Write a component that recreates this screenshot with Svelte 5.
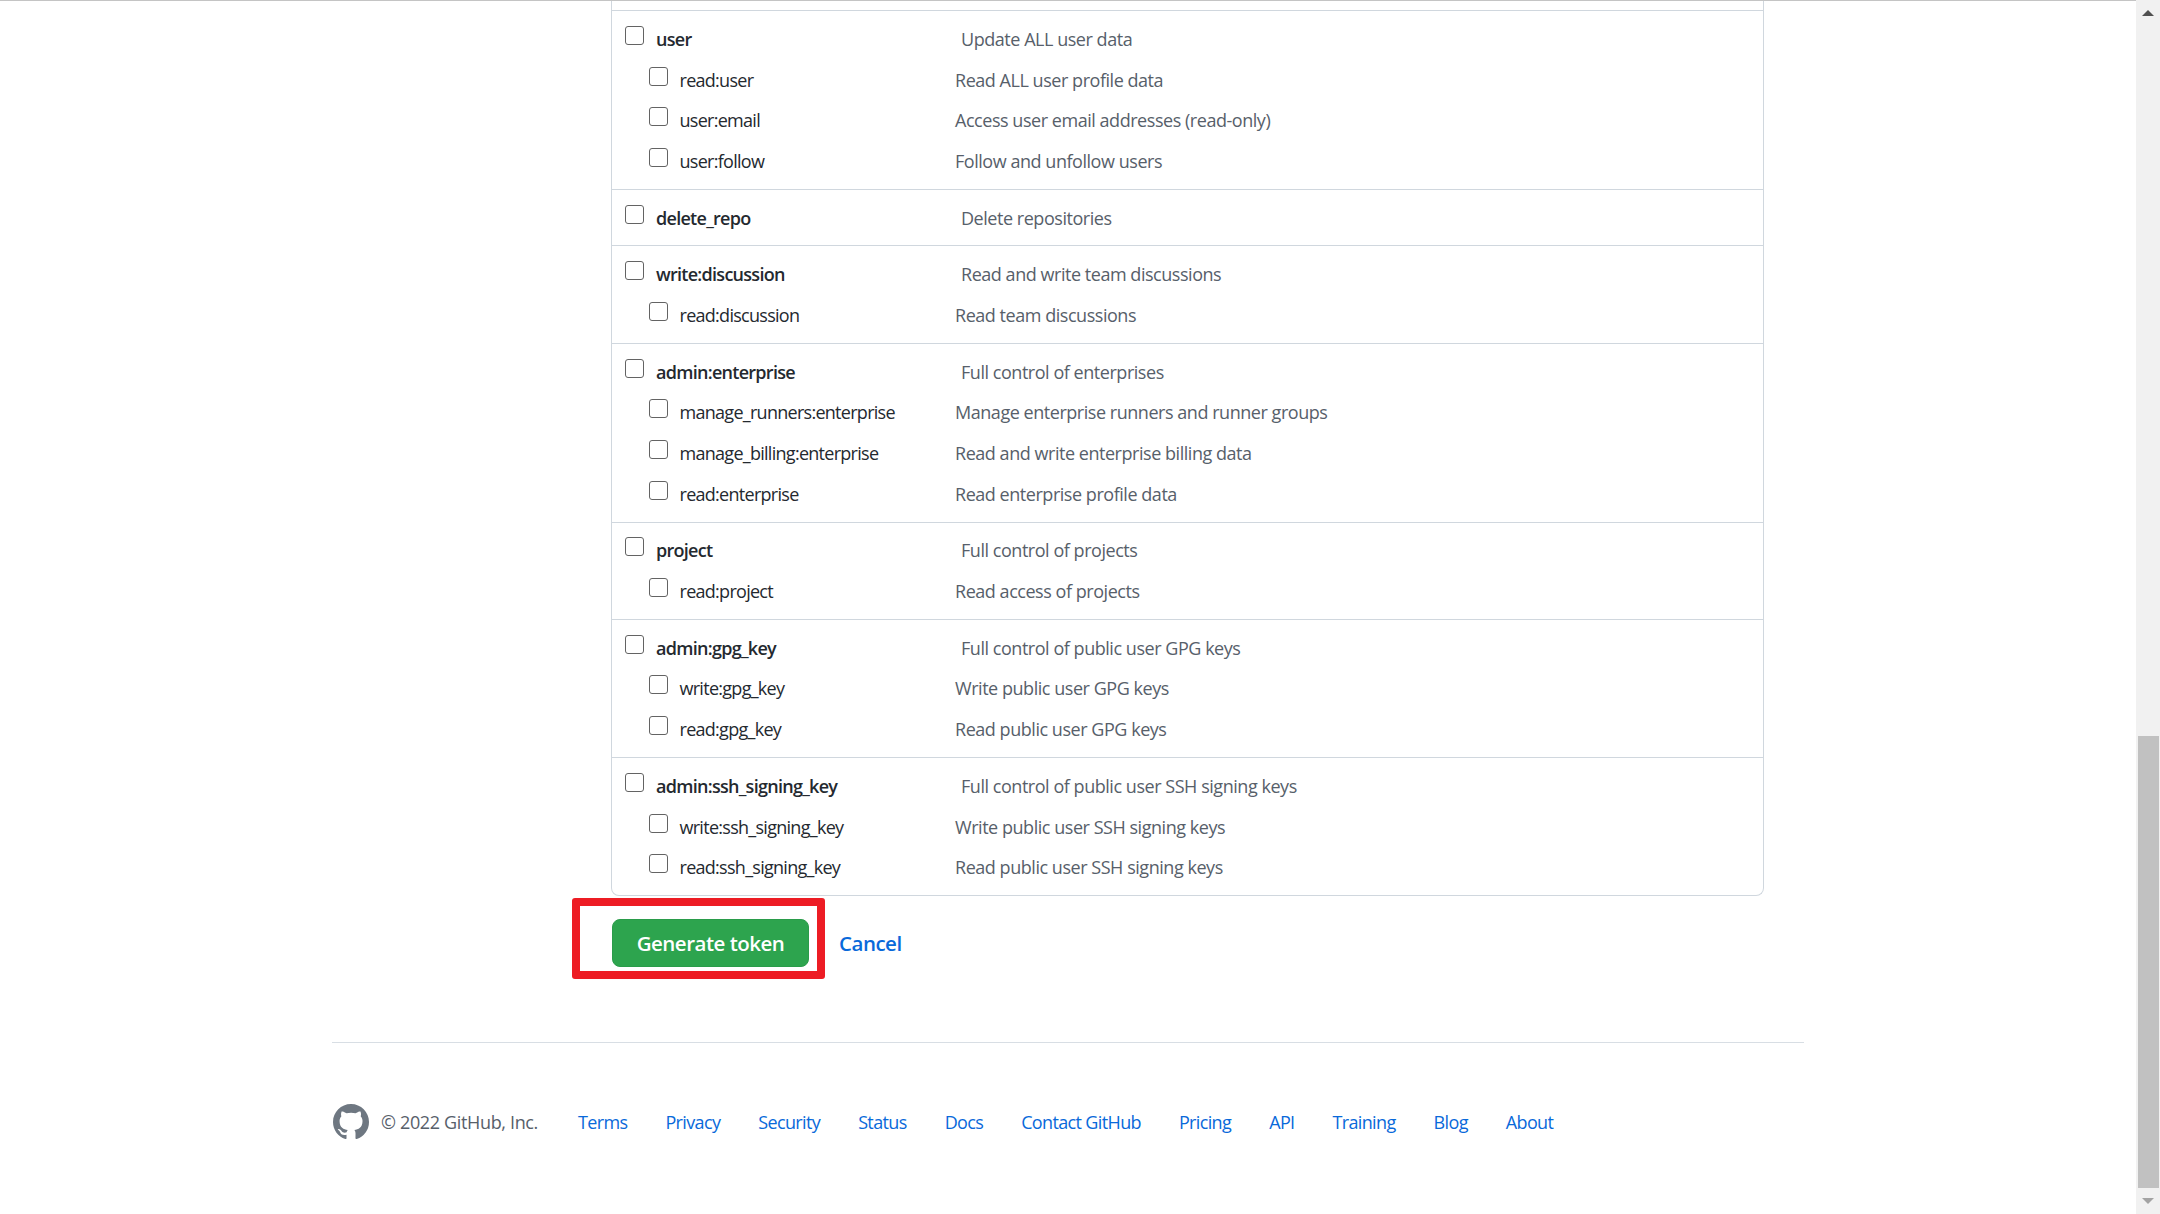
<script lang="ts">
  const scopes = [
    { name: "user", desc: "Update ALL user data", subs: [
      ["read:user", "Read ALL user profile data"],
      ["user:email", "Access user email addresses (read-only)"],
      ["user:follow", "Follow and unfollow users"],
    ] },
    { name: "delete_repo", desc: "Delete repositories", subs: [] },
    { name: "write:discussion", desc: "Read and write team discussions", subs: [
      ["read:discussion", "Read team discussions"],
    ] },
    { name: "admin:enterprise", desc: "Full control of enterprises", subs: [
      ["manage_runners:enterprise", "Manage enterprise runners and runner groups"],
      ["manage_billing:enterprise", "Read and write enterprise billing data"],
      ["read:enterprise", "Read enterprise profile data"],
    ] },
    { name: "project", desc: "Full control of projects", subs: [
      ["read:project", "Read access of projects"],
    ] },
    { name: "admin:gpg_key", desc: "Full control of public user GPG keys", subs: [
      ["write:gpg_key", "Write public user GPG keys"],
      ["read:gpg_key", "Read public user GPG keys"],
    ] },
    { name: "admin:ssh_signing_key", desc: "Full control of public user SSH signing keys", subs: [
      ["write:ssh_signing_key", "Write public user SSH signing keys"],
      ["read:ssh_signing_key", "Read public user SSH signing keys"],
    ] },
  ];

  const links = ["Terms", "Privacy", "Security", "Status", "Docs", "Contact GitHub", "Pricing", "API", "Training", "Blog", "About"];
</script>

<div class="window">
  <main class="page">
    <div class="container">
      <div class="form">
        <div class="scopes">
          <div class="clipped"></div>
          {#each scopes as scope (scope.name)}
            <section class="scope">
              <label class="row parent">
                <input type="checkbox" />
                <span class="name">{scope.name}</span>
                <span class="desc">{scope.desc}</span>
              </label>
              {#each scope.subs as sub (sub[0])}
                <label class="row child">
                  <input type="checkbox" />
                  <span class="name">{sub[0]}</span>
                  <span class="desc">{sub[1]}</span>
                </label>
              {/each}
            </section>
          {/each}
        </div>

        <div class="actions">
          <div class="button-wrap">
            <button class="generate">Generate token</button>
            <div class="highlight"></div>
          </div>
          <a class="cancel" href="#cancel">Cancel</a>
        </div>
      </div>

      <footer class="footer">
        <svg class="mark" viewBox="0 0 16 16" width="36" height="36" aria-hidden="true">
          <path fill="currentColor" d="M8 0C3.58 0 0 3.58 0 8c0 3.54 2.29 6.53 5.47 7.59.4.07.55-.17.55-.38 0-.19-.01-.82-.01-1.49-2.01.37-2.53-.49-2.69-.94-.09-.23-.48-.94-.82-1.13-.28-.15-.68-.52-.01-.53.63-.01 1.08.58 1.23.82.72 1.21 1.87.87 2.33.66.07-.52.28-.87.51-1.07-1.78-.2-3.64-.89-3.64-3.95 0-.87.31-1.59.82-2.15-.08-.2-.36-1.02.08-2.12 0 0 .67-.21 2.2.82.64-.18 1.32-.27 2-.27.68 0 1.36.09 2 .27 1.53-1.04 2.2-.82 2.2-.82.44 1.1.16 1.92.08 2.12.51.56.82 1.27.82 2.15 0 3.07-1.87 3.75-3.65 3.95.29.25.54.73.54 1.48 0 1.07-.01 1.93-.01 2.2 0 .21.15.46.55.38A8.013 8.013 0 0016 8c0-4.42-3.58-8-8-8z" />
        </svg>
        <span class="copyright">© 2022 GitHub, Inc.</span>
        <nav class="links">
          {#each links as link}
            <a href="#{link}">{link}</a>
          {/each}
        </nav>
      </footer>
    </div>
  </main>

  <div class="scrollbar">
    <div class="arrow up"></div>
    <div class="track-top"></div>
    <div class="thumb"></div>
    <div class="arrow down"></div>
  </div>
</div>

<style>
  :global(body) {
    margin: 0;
    overflow: hidden;
    background: #fff;
  }

  .window {
    display: flex;
    height: 1214px;
    font-family: "Open Sans", "Liberation Sans", sans-serif;
    font-size: 18px;
    letter-spacing: -0.46px;
    color: #24292f;
  }

  .page {
    flex: 1;
    border-top: 1px solid #c4c4c4;
    overflow: hidden;
  }

  .container {
    width: 1472px;
    margin: 0 auto;
  }

  .form {
    padding-left: 279px;
  }

  .scopes {
    width: 1153px;
    box-sizing: border-box;
    border: 1px solid #d0d7de;
    border-top: none;
    border-radius: 0 0 8px 8px;
  }

  .clipped {
    height: 9px;
    border-bottom: 1px solid #d0d7de;
  }

  .scope {
    padding: 8px 0 7px;
    border-bottom: 1px solid #d0d7de;
  }

  .scope:last-child {
    border-bottom: none;
  }

  .row {
    display: grid;
    align-items: center;
    height: 40.7px;
  }

  .parent {
    grid-template-columns: 31px 305px 1fr;
    padding-left: 13px;
  }

  .child {
    grid-template-columns: 30.5px 275.5px 1fr;
    padding-left: 37px;
  }

  .name {
    letter-spacing: -0.72px;
    margin-bottom: 1px;
  }

  .parent .name {
    font-weight: 600;
  }

  .desc {
    color: #57606a;
    margin-bottom: 1px;
  }

  input {
    appearance: none;
    width: 19px;
    height: 19px;
    margin: 0 0 8px;
    box-sizing: border-box;
    border: 1.5px solid #636363;
    border-radius: 3px;
    background: #fff;
  }

  .actions {
    display: flex;
    align-items: center;
    gap: 30px;
    margin: 23px 0 0 1px;
  }

  .button-wrap {
    position: relative;
  }

  .generate {
    display: block;
    width: 197px;
    height: 48px;
    padding: 0;
    border: 1px solid #2a9c4a;
    border-radius: 8px;
    background: #2da44e;
    color: #fff;
    font: 600 20.5px "Open Sans", "Liberation Sans", sans-serif;
    letter-spacing: -0.5px;
  }

  .highlight {
    position: absolute;
    left: -40px;
    top: -21px;
    right: -16px;
    bottom: -12px;
    border: 8px solid #ed1c24;
    border-radius: 3px;
  }

  .cancel {
    color: #0969da;
    font-size: 20.5px;
    font-weight: 600;
    letter-spacing: -0.5px;
    text-decoration: none;
  }

  .footer {
    display: flex;
    align-items: center;
    margin-top: 75px;
    padding-top: 61px;
    border-top: 1px solid #d8dee4;
  }

  .mark {
    color: #6e7781;
    margin: 0 12px 0 1px;
  }

  .copyright {
    color: #57606a;
    margin-right: 40px;
    letter-spacing: -0.35px;
  }

  .links {
    display: flex;
    gap: 38px;
  }

  .links a {
    color: #0969da;
    letter-spacing: -0.64px;
    text-decoration: none;
  }

  .scrollbar {
    width: 24px;
    display: flex;
    flex-direction: column;
    align-items: center;
    background: #f1f1f1;
  }

  .arrow {
    width: 0;
    height: 0;
    border-left: 6px solid transparent;
    border-right: 6px solid transparent;
  }

  .up {
    margin-top: 10px;
    border-bottom: 6px solid #505050;
  }

  .track-top {
    flex: 1;
  }

  .thumb {
    width: 21px;
    height: 452px;
    background: #c1c1c1;
  }

  .down {
    margin: 10px 0;
    border-top: 6px solid #a3a3a3;
  }
</style>
